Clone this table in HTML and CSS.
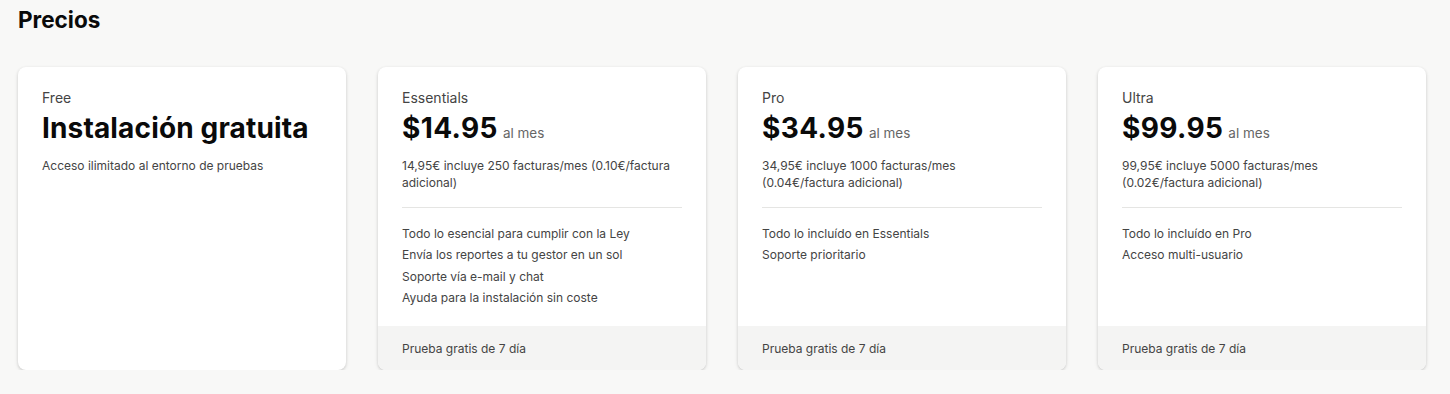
FILE: index.html
```html
<!DOCTYPE html>
<html lang="es">
<head>
<meta charset="utf-8">
<title>Precios</title>
<link rel="stylesheet" href="styles.css">
</head>
<body>
<main class="page">
  <h1 class="title">Precios</h1>
  <section class="plans">
    <article class="card">
      <div class="card-body">
        <div class="plan-name">Free</div>
        <div class="price-row"><span class="price price-text">Instalación gratuita</span></div>
        <p class="desc">Acceso ilimitado al entorno de pruebas</p>
      </div>
    </article>
    <article class="card">
      <div class="card-body">
        <div class="plan-name">Essentials</div>
        <div class="price-row"><span class="price">$14.95</span><span class="period">al mes</span></div>
        <p class="desc">14,95€ incluye 250 facturas/mes (0.10€/factura adicional)</p>
        <hr class="divider">
        <ul class="features">
          <li>Todo lo esencial para cumplir con la Ley</li>
          <li>Envía los reportes a tu gestor en un sol</li>
          <li>Soporte vía e-mail y chat</li>
          <li>Ayuda para la instalación sin coste</li>
        </ul>
      </div>
      <div class="card-foot">Prueba gratis de 7 día</div>
    </article>
    <article class="card">
      <div class="card-body">
        <div class="plan-name">Pro</div>
        <div class="price-row"><span class="price">$34.95</span><span class="period">al mes</span></div>
        <p class="desc">34,95€ incluye 1000 facturas/mes (0.04€/factura adicional)</p>
        <hr class="divider">
        <ul class="features">
          <li>Todo lo incluído en Essentials</li>
          <li>Soporte prioritario</li>
        </ul>
      </div>
      <div class="card-foot">Prueba gratis de 7 día</div>
    </article>
    <article class="card">
      <div class="card-body">
        <div class="plan-name">Ultra</div>
        <div class="price-row"><span class="price">$99.95</span><span class="period">al mes</span></div>
        <p class="desc">99,95€ incluye 5000 facturas/mes (0.02€/factura adicional)</p>
        <hr class="divider">
        <ul class="features">
          <li>Todo lo incluído en Pro</li>
          <li>Acceso multi-usuario</li>
        </ul>
      </div>
      <div class="card-foot">Prueba gratis de 7 día</div>
    </article>
  </section>
</main>
</body>
</html>
```
FILE: styles.css
```css
* { box-sizing: border-box; }
html, body { margin: 0; padding: 0; }
body {
  background: #f8f8f7;
  font-family: Inter, "Noto Sans", "Liberation Sans", sans-serif;
  color: #111;
}
.page {
  padding: 4px 18px 0;
}
.title {
  margin: 0;
  font-size: 22.5px;
  line-height: 32px;
  font-weight: 700;
  color: #0a0a0a;
}
.plans {
  margin-top: 31px;
  display: grid;
  grid-template-columns: repeat(4, 328px);
  column-gap: 32px;
  align-items: stretch;
}
.card {
  background: #fff;
  border-radius: 8px;
  box-shadow: 0 1px 3px rgba(0,0,0,0.14), 0 2px 5px rgba(0,0,0,0.07);
  display: flex;
  flex-direction: column;
  overflow: hidden;
  height: 303px;
}
.card-body {
  padding: 21px 24px 0;
  flex: 1;
}
.plan-name {
  font-size: 14px;
  line-height: 20px;
  color: #444;
}
.price-row {
  display: flex;
  align-items: baseline;
  gap: 5px;
  margin-top: 3px;
}
.price {
  font-size: 28px;
  line-height: 34px;
  font-weight: 700;
  letter-spacing: 0.4px;
  color: #0a0a0a;
}
.price-text {
  letter-spacing: 0.15px;
}
.period {
  font-size: 13.5px;
  color: #666;
}
.desc {
  margin: 12px 0 0;
  max-width: 274px;
  font-size: 12px;
  line-height: 17px;
  color: #444;
}
.divider {
  border: 0;
  border-top: 1px solid #e5e5e3;
  margin: 16px 0 0;
}
.features {
  list-style: none;
  margin: 15px 0 0;
  padding: 0;
  font-size: 12px;
  line-height: 21.3px;
  color: #444;
}
.card-foot {
  background: #f4f4f3;
  height: 44px;
  padding: 0 24px;
  display: flex;
  align-items: center;
  font-size: 12px;
  color: #444;
}
```
